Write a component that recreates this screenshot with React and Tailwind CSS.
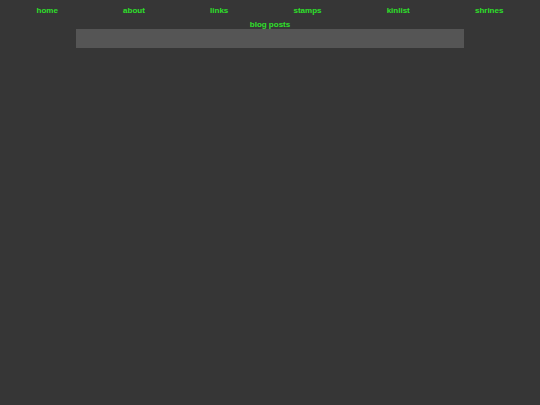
import React from 'react';

const links = ['home', 'about', 'links', 'stamps', 'kinlist', 'shrines', 'blog posts'];

export default function App() {
  return (
    <div className="min-h-screen w-full bg-[#363636] font-['Liberation_Sans',sans-serif]">
      <nav className="flex flex-wrap justify-around gap-y-[6px] px-[4px] pt-[7px]">
        {links.map((l) => (
          <a
            key={l}
            href="#"
            className="px-[28px] text-[8px] leading-[8px] font-bold text-[#2ee02a]"
          >
            {l}
          </a>
        ))}
      </nav>
      <div className="mx-auto h-[19px] w-[388px] bg-[#555555]" />
    </div>
  );
}
